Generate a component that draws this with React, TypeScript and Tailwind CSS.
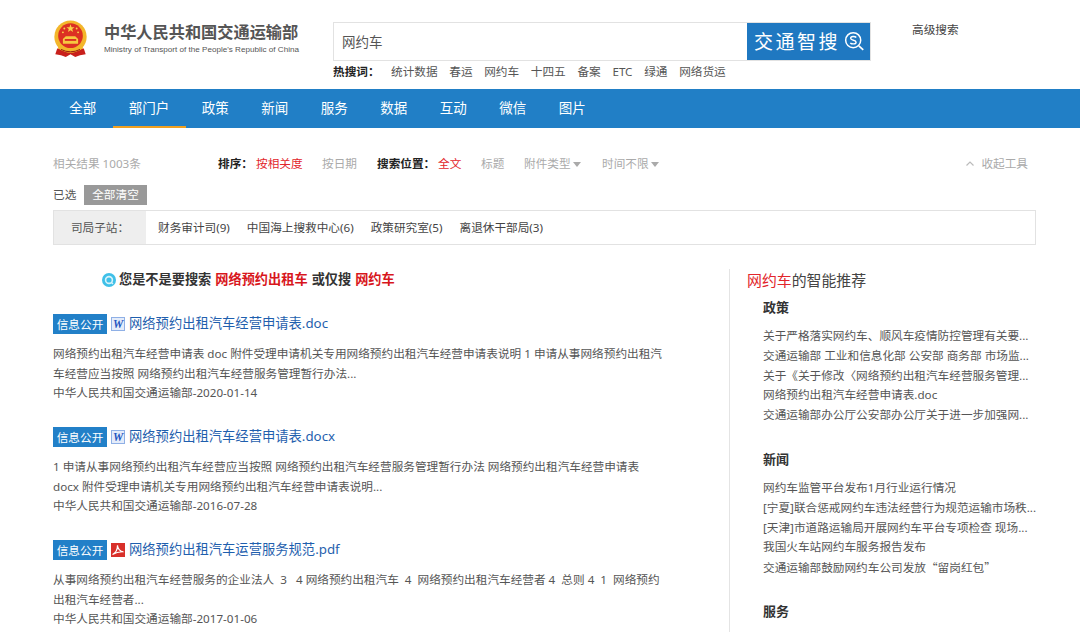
import React from 'react';

const FONT = 'font-["Noto_Sans","Noto_Sans_CJK_SC",sans-serif]';

const Emblem = () => (
  <svg viewBox="0 0 36 40" className="w-[35px] h-[38px] shrink-0">
    <path d="M4 30 L2 36 L8 37 L13 39 L18 36 L23 39 L28 37 L34 36 L32 30 Z" fill="#c8201c" />
    <circle cx="18" cy="17.5" r="17" fill="#f3b62b" />
    <circle cx="18" cy="16.5" r="13" fill="#dc3023" />
    <path d="M5 24 Q18 38 31 24 L31 30 Q18 38 5 30 Z" fill="#f3b62b" />
    <path d="M18 4.5 l1.1 3 3.2.1 -2.5 2 .9 3 -2.7-1.8 -2.7 1.8 .9-3 -2.5-2 3.2-.1 Z" fill="#f8d24a" />
    <circle cx="11.5" cy="9" r="1" fill="#f8d24a" />
    <circle cx="24.5" cy="9" r="1" fill="#f8d24a" />
    <circle cx="10" cy="13" r="1" fill="#f8d24a" />
    <circle cx="26" cy="13" r="1" fill="#f8d24a" />
    <path d="M10 20 L13 17 H23 L26 20 V25 H10 Z" fill="#f6c840" />
    <rect x="12" y="20" width="12" height="2" fill="#dc3023" />
    <path d="M8 31 Q18 36 28 31" stroke="#8d1410" strokeWidth="1" fill="none" />
  </svg>
);

const SearchMark = () => (
  <svg viewBox="0 0 24 24" className="w-[21px] h-[21px] shrink-0" fill="none" stroke="#fff">
    <circle cx="10.5" cy="10.5" r="8.6" strokeWidth="1.7" />
    <path d="M17 17 L22 21.5" strokeWidth="2" />
    <path d="M14 7.4 C12.6 5.8 7.6 5.8 7.6 8.4 C7.6 11.2 13.8 10 13.8 12.8 C13.8 15.2 8.8 15.2 7.2 13.6" strokeWidth="1.6" />
  </svg>
);

const WordIcon = () => (
  <svg viewBox="0 0 14 14" className="w-[14px] h-[14px] shrink-0">
    <rect x="0.5" y="0.5" width="13" height="13" fill="#e4ecfa" stroke="#8fb0e6" />
    <text x="7" y="11" textAnchor="middle" fontSize="11.5" fontWeight="700" fontStyle="italic" fontFamily="Liberation Serif, serif" fill="#1f55c0">W</text>
  </svg>
);

const PdfIcon = () => (
  <svg viewBox="0 0 14 14" className="w-[14px] h-[14px] shrink-0">
    <rect width="14" height="14" fill="#d8302a" />
    <path d="M1.5 11.5 C4.5 10 6.5 6 6.5 2.2 C6.5 5.5 9 8.6 12.5 8.8 C8.8 8.6 4.5 9.6 1.5 11.5 Z" fill="none" stroke="#fff" strokeWidth="1.2" />
  </svg>
);

const Caret = () => <span className="inline-block ml-[2px] mb-[1px] border-x-[4px] border-x-transparent border-t-[5px] border-t-[#aaa]" />;

const navItems = ['全部', '部门户', '政策', '新闻', '服务', '数据', '互动', '微信', '图片'];
const hotWords = ['统计数据', '春运', '网约车', '十四五', '备案', 'ETC', '绿通', '网络货运'];
const subSites = ['财务审计司(9)', '中国海上搜救中心(6)', '政策研究室(5)', '离退休干部局(3)'];

const results = [
  {
    title: '网络预约出租汽车经营申请表.doc',
    type: 'word',
    lines: ['网络预约出租汽车经营申请表 doc 附件受理申请机关专用网络预约出租汽车经营申请表说明 1 申请从事网络预约出租汽', '车经营应当按照 网络预约出租汽车经营服务管理暂行办法...'],
    source: '中华人民共和国交通运输部-2020-01-14',
  },
  {
    title: '网络预约出租汽车经营申请表.docx',
    type: 'word',
    lines: ['1 申请从事网络预约出租汽车经营应当按照 网络预约出租汽车经营服务管理暂行办法 网络预约出租汽车经营申请表', 'docx 附件受理申请机关专用网络预约出租汽车经营申请表说明...'],
    source: '中华人民共和国交通运输部-2016-07-28',
  },
  {
    title: '网络预约出租汽车运营服务规范.pdf',
    type: 'pdf',
    lines: ['从事网络预约出租汽车经营服务的企业法人  3   4 网络预约出租汽车  4  网络预约出租汽车经营者 4  总则 4  1  网络预约', '出租汽车经营者...'],
    source: '中华人民共和国交通运输部-2017-01-06',
  },
];

const sideGroups = [
  {
    name: '政策',
    items: ['关于严格落实网约车、顺风车疫情防控管理有关要...', '交通运输部 工业和信息化部 公安部 商务部 市场监...', '关于《关于修改〈网络预约出租汽车经营服务管理...', '网络预约出租汽车经营申请表.doc', '交通运输部办公厅公安部办公厅关于进一步加强网...'],
  },
  {
    name: '新闻',
    items: ['网约车监管平台发布1月行业运行情况', '[宁夏]联合惩戒网约车违法经营行为规范运输市场秩...', '[天津]市道路运输局开展网约车平台专项检查 现场...', '我国火车站网约车服务报告发布', '交通运输部鼓励网约车公司发放“留岗红包”'],
  },
  { name: '服务', items: [] },
];

const ResultItem = ({ title, type, lines, source }: { title: string; type: string; lines: string[]; source: string }) => (
  <div className="h-[113px]">
    <div className="flex items-center h-5">
      <span className="w-[54px] h-5 bg-[#2280c8] text-white text-[11.65px] leading-[21px] text-center">信息公开</span>
      <span className="ml-1">{type === 'pdf' ? <PdfIcon /> : <WordIcon />}</span>
      <span className="ml-1 text-[13.3px] text-[#1f5fae] whitespace-nowrap">{title}</span>
    </div>
    <div className="mt-[10px] text-[11.65px] leading-5 text-[#555]">
      {lines.map((l) => (
        <div key={l} className="whitespace-pre">{l}</div>
      ))}
      <div className="-mt-px">{source}</div>
    </div>
  </div>
);

const App: React.FC = () => {
  return (
    <div className={`${FONT} w-[1080px] h-[632px] overflow-hidden bg-white text-[#333]`}>
      {/* Header */}
      <div className="h-[89px] flex pl-[53px]">
        <div className="pt-[20px]"><Emblem /></div>
        <div className="ml-[16px] pt-[21px] w-[229px]">
          <div className="text-[16.2px] leading-[22px] font-bold text-[#555] whitespace-nowrap">中华人民共和国交通运输部</div>
          <div className="text-[8.1px] leading-3 mt-[1px] text-[#555] whitespace-nowrap font-['Liberation_Sans',sans-serif]">Ministry of Transport of the People's Republic of China</div>
        </div>
        <div className="pt-[22px]">
          <div className="flex w-[538px] h-[39px] border border-[#e2e2e2]">
            <div className="w-[413px] pl-2 text-[13.5px] leading-[39px] text-[#555]">网约车</div>
            <div className="flex-1 h-[37px] bg-[#1f78c1] flex items-center pl-[7px] gap-[4px]">
              <span className="text-[19px] leading-[38px] tracking-[2.5px] text-white whitespace-nowrap">交通智搜</span>
              <SearchMark />
            </div>
          </div>
          <div className="flex items-center mt-[1px] text-[11.65px] leading-5 text-[#555]">
            <span className="font-bold text-[#222] w-[58px]">热搜词：</span>
            <div className="flex gap-[11.7px]">
              {hotWords.map((w) => (
                <span key={w} className="whitespace-nowrap">{w}</span>
              ))}
            </div>
          </div>
        </div>
        <div className="ml-[41px] pt-[21px] text-[11.65px] leading-[18px] text-[#444] whitespace-nowrap">高级搜索</div>
      </div>

      {/* Nav */}
      <div className="h-[39px] bg-[#217fc6] flex pl-[53px]">
        {navItems.map((n, i) => (
          <div key={n} className={`h-[39px] px-[16.25px] text-[13.5px] leading-[38px] text-white whitespace-nowrap ${i === 1 ? 'border-b-2 border-[#f0a020]' : ''}`}>
            {n}
          </div>
        ))}
      </div>

      {/* Toolbar */}
      <div className="flex items-center h-5 mt-[26px] ml-[53px] w-[975px] text-[11.65px] text-[#aaa] whitespace-nowrap">
        <span className="w-[165px]">相关结果 1003条</span>
        <span className="font-bold text-[#222] w-[38px]">排序：</span>
        <span className="text-[#e2252b] w-[66px]">按相关度</span>
        <span className="w-[55px]">按日期</span>
        <span className="font-bold text-[#222] w-[61px]">搜索位置：</span>
        <span className="text-[#e2252b] w-[43px]">全文</span>
        <span className="w-[43px]">标题</span>
        <span className="w-[78px]">附件类型<Caret /></span>
        <span className="flex-1">时间不限<Caret /></span>
        <span className="flex items-center">
          <svg viewBox="0 0 8 5" className="w-2 h-[5px] mr-[7px]" fill="none" stroke="#bbb" strokeWidth="1.2"><path d="M.5 4.5 4 1 7.5 4.5" /></svg>
          收起工具
        </span>
      </div>

      {/* Selected */}
      <div className="flex items-center h-5 mt-[11px] ml-[53px] text-[11.65px] text-[#555]">
        <span className="w-[31px]">已选</span>
        <span className="w-[63px] h-5 bg-[#999] text-white text-center leading-5">全部清空</span>
      </div>

      {/* Sub sites */}
      <div className="flex h-[35px] mt-[5px] mr-[44px] ml-[53px] border border-[#e2e2e2] text-[11.65px] leading-[33px]">
        <div className="w-[92px] bg-[#eeeeee] text-center text-[#555]">司局子站：</div>
        <div className="flex gap-[17px] pl-3 text-[#444]">
          {subSites.map((s) => (
            <span key={s} className="whitespace-nowrap">{s}</span>
          ))}
        </div>
      </div>

      {/* Body */}
      <div className="flex mt-[24px] ml-[53px]">
        <div className="w-[676px]">
          <div className="flex items-center h-5 ml-[49px] mt-[1px] text-[13.2px] font-bold text-[#333] whitespace-nowrap">
            <svg viewBox="0 0 14 14" className="w-[14px] h-[14px] mr-[3px]">
              <circle cx="7" cy="7" r="7" fill="#3fc0e8" />
              <circle cx="7" cy="7" r="3.4" fill="none" stroke="#d8f3fb" strokeWidth="1.6" />
              <path d="M9.5 9.5 L11 11" stroke="#d8f3fb" strokeWidth="1.4" />
            </svg>
            <span>您是不是要搜索</span>
            <span className="ml-1 text-[#d8161c]">网络预约出租车</span>
            <span className="ml-1">或仅搜</span>
            <span className="ml-1 text-[#d8161c]">网约车</span>
          </div>
          <div className="mt-[24px]">
            {results.map((r) => (
              <ResultItem key={r.title} {...r} />
            ))}
          </div>
        </div>
        <div className="border-l border-[#e4e4e4] pl-[17px] h-[400px] w-[300px]">
          <div className="text-[14.9px] leading-6 text-[#444] -mt-px mb-[2px] whitespace-nowrap">
            <span className="text-[#e2252b]">网约车</span>的智能推荐
          </div>
          {sideGroups.map((g) => (
            <div key={g.name} className="ml-4 h-[152px] pt-[2px]">
              <div className="text-[13px] leading-5 font-bold text-[#333] mt-[1px]">{g.name}</div>
              <div className="mt-[9px] text-[11.65px] leading-[19.8px] text-[#555]">
                {g.items.map((t) => (
                  <div key={t} className={`whitespace-nowrap ${t.includes('“') ? 'font-["Noto_Sans_CJK_SC",sans-serif]' : ''}`}>{t}</div>
                ))}
              </div>
            </div>
          ))}
        </div>
      </div>
    </div>
  );
};

export default App;
